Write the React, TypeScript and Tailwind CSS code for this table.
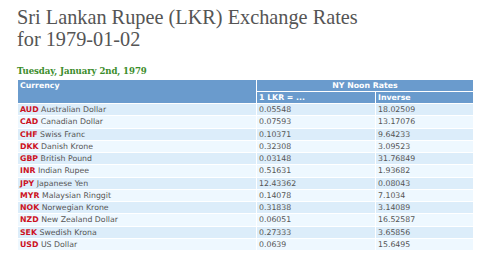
import React from 'react'

const rows = [
  ['AUD', 'Australian Dollar', '0.05548', '18.02509'],
  ['CAD', 'Canadian Dollar', '0.07593', '13.17076'],
  ['CHF', 'Swiss Franc', '0.10371', '9.64233'],
  ['DKK', 'Danish Krone', '0.32308', '3.09523'],
  ['GBP', 'British Pound', '0.03148', '31.76849'],
  ['INR', 'Indian Rupee', '0.51631', '1.93682'],
  ['JPY', 'Japanese Yen', '12.43362', '0.08043'],
  ['MYR', 'Malaysian Ringgit', '0.14078', '7.1034'],
  ['NOK', 'Norwegian Krone', '0.31838', '3.14089'],
  ['NZD', 'New Zealand Dollar', '0.06051', '16.52587'],
  ['SEK', 'Swedish Krona', '0.27333', '3.65856'],
  ['USD', 'US Dollar', '0.0639', '15.6495'],
]

export default function App() {
  return (
    <div className="w-[480px] h-[260px] bg-white overflow-hidden pl-[17px] pr-[6px] pt-[6px]">
      <h1 className="text-[20.3px] leading-[22px] text-[#555] font-['Liberation_Serif',serif]">
        Sri Lankan Rupee (LKR) Exchange Rates
        <br />
        for 1979-01-02
      </h1>
      <p className="mt-[15px] text-[8.6px] leading-[12px] font-bold text-[#3b8c2a] font-['DejaVu_Serif',serif] tracking-[-0.1px]">
        Tuesday, January 2nd, 1979
      </p>
      <table className="mt-[2px] w-full border-separate border-spacing-[1px] font-['DejaVu_Sans',sans-serif] text-[7.8px] leading-[11px]">
        <thead>
          <tr className="bg-[#6a9bcd] text-white font-bold">
            <th rowSpan={2} className="text-left align-top px-[2px] w-[238px]">Currency</th>
            <th colSpan={2} className="text-center px-[2px] h-[11px]">NY Noon Rates</th>
          </tr>
          <tr className="bg-[#6a9bcd] text-white font-bold">
            <th className="text-left px-[2px] w-[118px] h-[11px]">1 LKR = ...</th>
            <th className="text-left px-[2px]">Inverse</th>
          </tr>
        </thead>
        <tbody className="text-[#555]">
          {rows.map(([code, name, rate, inv], i) => (
            <tr key={code} className={i % 2 === 0 ? 'bg-[#dcedfa]' : 'bg-[#eef8ff]'}>
              <td className="px-[2px] h-[11.25px] whitespace-nowrap">
                <span className="font-bold text-[#cc1122]">{code}</span> {name}
              </td>
              <td className="px-[2px]">{rate}</td>
              <td className="px-[2px]">{inv}</td>
            </tr>
          ))}
        </tbody>
      </table>
    </div>
  )
}
